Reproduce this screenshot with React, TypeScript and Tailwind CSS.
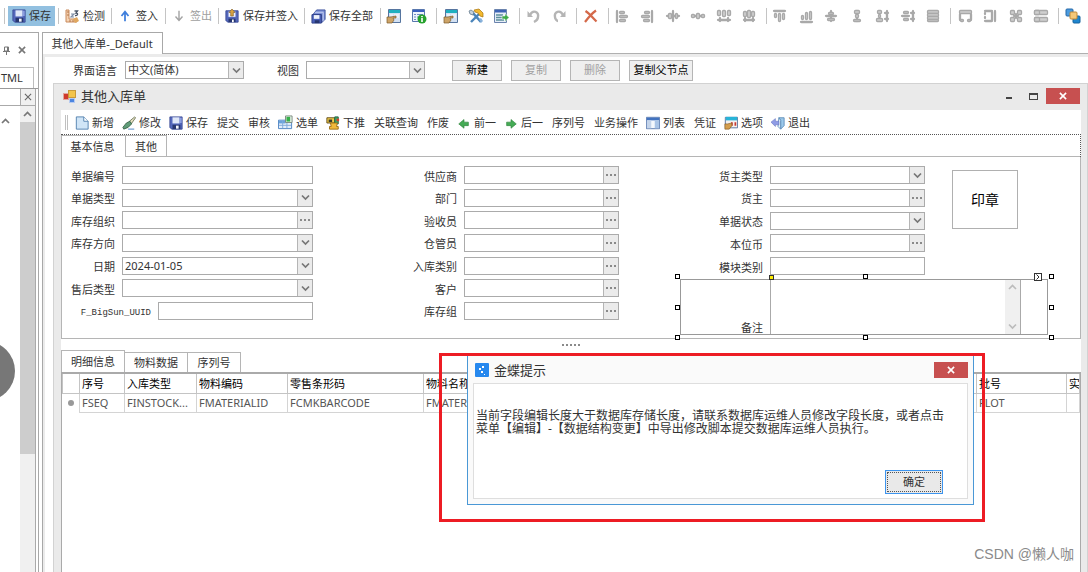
import type { ReactNode } from "react";
import clsx from "clsx";

type Rect = [number, number, number, number];

/* ---------- icons ---------- */

function Svg({ children, size = 16 }: { children: ReactNode; size?: number }) {
  return (
    <svg width={size} height={size} viewBox="0 0 16 16" className="shrink-0" aria-hidden="true">
      {children}
    </svg>
  );
}

function SaveIcon() {
  return (
    <Svg size={14}>
      <path d="M1 1h14v14H3l-2-2z" fill="#5468bd" stroke="#3a4a96" />
      <path d="M4 1.5h8v7H4z" fill="#dfe7f8" />
      <path d="M12.500 2h2v6h-2z" fill="#8d9fe0" />
      <path d="M4 10h9v5H4z" fill="#27366f" />
      <path d="M8 11h3v3.500H8z" fill="#f4f6fc" />
    </Svg>
  );
}

function SaveInIcon() {
  return (
    <Svg size={14}>
      <path d="M1 2h14v13H3l-2-2z" fill="#5468bd" stroke="#3a4a96" />
      <path d="M4 3h8v6H4z" fill="#eef2fb" />
      <path d="M8 0l3.500 4H9.500v4h-3V4h-2z" fill="#d9a441" stroke="#7c5a28" strokeWidth=".7" />
      <path d="M4 11h8v4H4z" fill="#27366f" />
      <path d="M8 12h2v3H8z" fill="#fff" />
    </Svg>
  );
}

function SaveAllIcon() {
  return (
    <Svg size={15}>
      <path d="M6 1h9v10l-4 4V6H2z" fill="#7d90d6" stroke="#3a4f9c" />
      <path d="M4 3.500h9v9" fill="none" stroke="#c4cff0" />
      <path d="M1 6h10v9H1z" fill="#4a60ba" stroke="#2f4088" />
      <path d="M3 6.500h6v4H3z" fill="#eef2fb" />
      <path d="M4 12h5v3H4z" fill="#27366f" />
    </Svg>
  );
}

function CheckIcon() {
  return (
    <Svg>
      <path d="M2 2h3v9h8v3H2z" fill="#f5d3b3" stroke="#c98a5c" />
      <path d="M3 4h2M3 7h2M6 12v2M9 12v2" stroke="#b27446" />
      <path d="M7 6h3l-3 3h3" fill="none" stroke="#7f8fa8" strokeWidth="1.200" />
      <path d="M10.500 3h3L12 5c2.500 0 2 3-1 2.500" fill="none" stroke="#4a5568" strokeWidth="1.300" />
      <path d="M9 11l4-2 2 4-4 2z" fill="#e0a860" />
    </Svg>
  );
}

function ArrowIcon({ up }: { up?: boolean }) {
  return (
    <Svg size={14}>
      {up ? (
        <path d="M8 14V4M4 8l4-5 4 5" fill="none" stroke="#3f7fdc" strokeWidth="2" />
      ) : (
        <path d="M8 2v10M4 8.500l4 4.500 4-4.500" fill="none" stroke="#a3a3a3" strokeWidth="1.600" />
      )}
    </Svg>
  );
}

function FormHandIcon() {
  return (
    <Svg>
      <path d="M2.500 1.500h12v13h-12z" fill="#d3e1f3" stroke="#56759f" />
      <path d="M3 2h11v3H3z" fill="#1fb0c0" />
      <path d="M4 7h3M8 7h5M8 9h5" stroke="#fff" />
      <path d="M1 9h4l5-1v2H7l1 2-2 3H1z" fill="#cda468" stroke="#7c5a28" strokeWidth=".7" />
    </Svg>
  );
}

function FormInfoIcon() {
  return (
    <Svg>
      <path d="M1.500 1.500h12v12h-12z" fill="#eef3fb" stroke="#5877ae" />
      <path d="M2 2h11v2H2z" fill="#3a5fc0" />
      <path d="M3 6.500h2M6 6.500h6M3 9h2M6 9h3M3 11.500h2" stroke="#6f8cc2" />
      <circle cx="11" cy="11" r="4.500" fill="#27a22e" />
      <path d="M11 10v4M11 8v1.200" stroke="#fff" strokeWidth="1.600" />
    </Svg>
  );
}

function ToolsIcon() {
  return (
    <Svg>
      <path d="M4 4l9 10" stroke="#4a84ba" strokeWidth="2.600" />
      <path d="M11 6L3 14" stroke="#4a84ba" strokeWidth="2.400" />
      <path d="M1 3l2-1 3 2-1 3-3-1z" fill="#c4d1dd" stroke="#5a7184" strokeWidth=".7" />
      <path d="M6 2l5-1 4 4 0 4-3-1-2-3-3-1z" fill="#f2b92f" stroke="#a8720c" strokeWidth=".7" />
      <path d="M11 11l2-1 2 3-2 2z" fill="#8ab3dc" />
    </Svg>
  );
}

function ExportIcon() {
  return (
    <Svg>
      <path d="M1.500 1.500h12v13h-12z" fill="#e6edf8" stroke="#6b83ad" />
      <path d="M2 2h11v2.500H2z" fill="#3c63b5" />
      <path d="M3 7h7M3 9.500h6M3 12h8" stroke="#5c8f9a" strokeWidth="1.500" />
      <path d="M9 8h3V5.500l4 4-4 4V11H9z" fill="#3dab48" stroke="#fff" strokeWidth=".5" />
    </Svg>
  );
}

function UndoIcon({ flip }: { flip?: boolean }) {
  return (
    <Svg>
      {flip ? (
        <>
          <path d="M12 7C9 1 3 4 4 9c0 2 2 4 3 4" fill="none" stroke="#b5b5b5" strokeWidth="2.400" />
          <path d="M14.500 3v6H9z" fill="#b5b5b5" />
        </>
      ) : (
        <>
          <path d="M4 7c3-6 9-3 8 2 0 2-2 4-4 5" fill="none" stroke="#b5b5b5" strokeWidth="2.400" />
          <path d="M1.500 3v6H7z" fill="#b5b5b5" />
        </>
      )}
    </Svg>
  );
}

function DeleteIcon() {
  return (
    <Svg>
      <path d="M2.500 3C7 6 10 10 13.500 13.500M13 2.500C8 6 5 10 2 14" stroke="#d4694a" strokeWidth="2.200" fill="none" />
    </Svg>
  );
}

function LayersIcon() {
  return (
    <Svg>
      <rect x="1" y="1" width="7" height="7" rx="1" fill="#4a9bdf" stroke="#2568a8" />
      <rect x="8" y="8" width="7" height="7" rx="1" fill="#1f86cf" stroke="#15629e" />
      <rect x="5" y="4" width="7" height="7" rx="1" fill="#f5c878" stroke="#c08a38" />
    </Svg>
  );
}

function BlockIcon({ rects }: { rects: Rect[] }) {
  return (
    <Svg>
      {rects.map(([x, y, w, h], i) => (
        <rect key={i} x={x + 0.5} y={y + 0.5} width={w - 1} height={h - 1} rx="1" fill="#cfcfcf" stroke="#a9a9a9" strokeWidth="1.300" />
      ))}
    </Svg>
  );
}

const HORIZONTAL: Rect[][] = [
  [[2, 2, 2, 13], [5, 3, 6, 3], [5, 7, 9, 3], [5, 11, 7, 3]],
  [[12, 2, 2, 13], [5, 3, 6, 3], [2, 7, 9, 3], [4, 11, 7, 3]],
  [[1, 7, 14, 2], [3, 5, 4, 6], [7, 2, 2, 12], [10, 5, 3, 6]],
  [[1, 7, 14, 2], [1, 6, 4, 4], [6, 5, 4, 6], [11, 6, 4, 4]],
  [[1, 2, 4, 6], [6, 2, 4, 7], [11, 2, 4, 6], [1, 11, 14, 2], [3, 9, 2, 5], [11, 9, 2, 5]],
  [[2, 3, 4, 6], [6, 2, 4, 8], [10, 3, 4, 6], [2, 11, 12, 2], [3, 9, 2, 5], [11, 9, 2, 5]],
];

const VERTICAL: Rect[][] = [
  [[1, 2, 13, 2], [2, 5, 3, 5], [6, 5, 3, 9], [10, 5, 3, 7]],
  [[2, 13, 13, 2], [3, 7, 3, 5], [7, 4, 3, 8], [11, 3, 3, 9]],
  [[7, 2, 2, 12], [5, 4, 6, 3], [2, 7, 12, 2], [4, 10, 8, 3]],
  [[7, 2, 2, 12], [5, 2, 6, 4], [6, 6, 4, 4], [4, 11, 8, 3]],
  [[3, 2, 5, 4], [4, 6, 3, 4], [2, 10, 7, 4], [12, 2, 2, 12], [10, 4, 5, 2], [10, 10, 5, 2]],
  [[3, 3, 6, 3], [1, 7, 9, 2], [3, 10, 6, 3], [12, 2, 2, 12], [10, 4, 5, 2], [10, 10, 5, 2]],
  [[2, 2, 12, 4], [2, 5, 12, 4], [2, 8, 12, 4], [2, 11, 12, 3]],
];

const SIZING: Rect[][] = [
  [[2, 2, 13, 4], [2, 5, 2, 8], [13, 5, 2, 8], [3, 11, 4, 3], [10, 11, 4, 3]],
  [[2, 2, 9, 2], [2, 4, 2, 3], [2, 8, 2, 3], [2, 12, 9, 2], [9, 3, 2, 10], [12, 2, 2, 12]],
  [[2, 2, 5, 5], [9, 2, 5, 5], [2, 9, 5, 5], [9, 9, 5, 5], [7, 5, 2, 6], [5, 7, 6, 2]],
  [[1, 2, 14, 5], [1, 9, 14, 5], [1, 2, 6, 5], [1, 9, 6, 5]],
];

function NewIcon() {
  return (
    <Svg size={14}>
      <path d="M1.500 1H10l5 5v9H1.500z" fill="#d0e5f7" stroke="#4a7cab" />
      <path d="M10 1v5h5" fill="#fff" stroke="#4a7cab" />
    </Svg>
  );
}

function BrushIcon() {
  return (
    <Svg size={14}>
      <path d="M14.500 1l-6 5 2 3 5-7z" fill="#e8e2c4" stroke="#6b7357" />
      <path d="M9 6l-4 2-4 5 1 2 5-2 4-4z" fill="#5f9c78" stroke="#3a6448" />
      <path d="M7 15h7" stroke="#7ba5d4" strokeWidth="1.500" />
    </Svg>
  );
}

function PickIcon() {
  return (
    <Svg size={15}>
      <path d="M.5 5.500h14v9H.5z" fill="#e3eefb" stroke="#4e83c2" />
      <path d="M1 6h7v3H1z" fill="#6aa3dc" />
      <path d="M5 6v8M9.500 8v6M1 11h13" stroke="#7fabdb" />
      <path d="M8 1h7v7H8z" fill="#eef6ef" stroke="#7a8a7e" />
      <path d="M9 2h4v5H9z" fill="#35b14a" />
    </Svg>
  );
}

function PushIcon() {
  return (
    <Svg size={14}>
      <path d="M1 2h9v6H1z" fill="#f3cf4a" stroke="#5b4410" />
      <path d="M3 4h4v3H3z" fill="#3a3a2a" />
      <path d="M10 1h4v8h-4z" fill="#3aa86c" stroke="#1f5f3c" />
      <path d="M12 3h3v3h-3z" fill="#d8402c" />
      <path d="M5 8h8l-1 4h2v3H4v-3h2z" fill="#f0b93a" stroke="#9a6c16" />
    </Svg>
  );
}

function GreenArrow({ left }: { left?: boolean }) {
  return (
    <Svg size={14}>
      <path
        d={left ? "M2 9l6-5v3h5v4H8v3z" : "M14 9L8 4v3H3v4h5v3z"}
        fill="#45ab55"
        stroke="#2a8038"
        strokeWidth=".7"
      />
    </Svg>
  );
}

function ListIcon() {
  return (
    <Svg size={14}>
      <path d="M.5 1.500h15v13H.5z" fill="#f4f8fd" stroke="#4b6ea8" />
      <path d="M1 2h14v3H1z" fill="#4273c0" />
      <path d="M1 5h5v9H1z" fill="#c4d4ea" />
      <path d="M10 5h5v9h-5z" fill="#a9c4e6" />
    </Svg>
  );
}

function OptionIcon() {
  return (
    <Svg size={14}>
      <path d="M1.500 1.500h14v12h-14z" fill="#f5f0ee" stroke="#4f6c9a" />
      <path d="M2 1h13v4H2z" fill="#28b4d8" />
      <path d="M8 7h2v4H8zM12 7h2v4h-2z" fill="#c83a34" />
      <path d="M1 9h3l5-1v3l-3 4H1z" fill="#d49e4e" stroke="#80561e" strokeWidth=".7" />
    </Svg>
  );
}

function ExitIcon() {
  return (
    <Svg size={14}>
      <path d="M9 2h6v9l-4 4V5z" fill="#9cc9ea" stroke="#5c8cb8" />
      <path d="M9 2l2 3v10l-3-3z" fill="#e5f1fa" stroke="#5c8cb8" />
      <path d="M0 7l5-4v3h4v4H5v2z" fill="#8f9ce6" stroke="#6b79c4" strokeWidth=".7" />
    </Svg>
  );
}

function Chevron({ up, light }: { up?: boolean; light?: boolean }) {
  return (
    <svg width="9" height="7" viewBox="0 0 9 7" aria-hidden="true">
      <path d={up ? "M1 5l3.500-3.500L8 5" : "M1 1.500L4.500 5 8 1.500"} fill="none" stroke={light ? "#bcbcbc" : "#777"} strokeWidth="1.700" />
    </svg>
  );
}

function Dots({ count = 3 }: { count?: number }) {
  return (
    <span className="flex gap-[2px]">
      {Array.from({ length: count }, (_, i) => (
        <span key={i} className="size-[2px] bg-[#8a8a8a]" />
      ))}
    </span>
  );
}

function Cross({ color, size = 9, thin }: { color: string; size?: number; thin?: boolean }) {
  return (
    <svg width={size} height={size} viewBox="0 0 9 9" aria-hidden="true">
      <path d="M1 1l7 7M8 1L1 8" stroke={color} strokeWidth={thin ? 1.2 : 1.8} />
    </svg>
  );
}

/* ---------- top toolbar ---------- */

function Group({ className, children }: { className: string; children: ReactNode }) {
  return <div className={clsx("flex h-4 shrink-0 items-center border-l border-[#c4c4c4]", className)}>{children}</div>;
}

function ToolButton({ icon, text, gap, muted }: { icon: ReactNode; text?: string; gap?: string; muted?: boolean }) {
  return (
    <button type="button" className={clsx("flex items-center whitespace-nowrap", gap ?? "gap-1", muted && "text-[#a0a0a0]")}>
      {icon}
      {text}
    </button>
  );
}

function TopToolbar() {
  return (
    <header className="flex h-8 shrink-0 items-center overflow-hidden pl-1">
      <Group className="w-[54px] pl-[3px]">
        <button type="button" className="flex h-5 w-[47px] items-center gap-[3px] bg-[#92c0e0] pl-1 whitespace-nowrap">
          <SaveIcon />
          保存
        </button>
      </Group>
      <Group className="w-[53px] pl-[5px]"><ToolButton icon={<CheckIcon />} text="检测" gap="gap-[3px]" /></Group>
      <Group className="w-[54px] pl-[6px]"><ToolButton icon={<ArrowIcon up />} text="签入" /></Group>
      <Group className="w-[53px] pl-[6px]"><ToolButton icon={<ArrowIcon />} text="签出" muted /></Group>
      <Group className="w-[86px] pl-[6px]"><ToolButton icon={<SaveInIcon />} text="保存并签入" /></Group>
      <Group className="w-[76px] pl-[6px]"><ToolButton icon={<SaveAllIcon />} text="保存全部" gap="gap-[3px]" /></Group>
      <Group className="w-14 gap-[9px] pl-[5px]">
        <ToolButton icon={<FormHandIcon />} />
        <ToolButton icon={<FormInfoIcon />} />
      </Group>
      <Group className="w-[83px] gap-[9px] pl-[6px]">
        <ToolButton icon={<FormHandIcon />} />
        <ToolButton icon={<ToolsIcon />} />
        <ToolButton icon={<ExportIcon />} />
      </Group>
      <Group className="w-[57px] gap-[9px] pl-[6px]">
        <ToolButton icon={<UndoIcon />} />
        <ToolButton icon={<UndoIcon flip />} />
      </Group>
      <Group className="w-8 pl-[6px]"><ToolButton icon={<DeleteIcon />} /></Group>
      <Group className="w-[158px] justify-between pr-[9px] pl-[5px]">
        {HORIZONTAL.map((rects, i) => <ToolButton key={i} icon={<BlockIcon rects={rects} />} />)}
      </Group>
      <Group className="w-[184px] justify-between pr-[9px] pl-[5px]">
        {VERTICAL.map((rects, i) => <ToolButton key={i} icon={<BlockIcon rects={rects} />} />)}
      </Group>
      <Group className="w-[108px] justify-between pr-[9px] pl-[6px]">
        {SIZING.map((rects, i) => <ToolButton key={i} icon={<BlockIcon rects={rects} />} />)}
      </Group>
      <Group className="w-[30px] pl-[6px]"><ToolButton icon={<LayersIcon />} /></Group>
    </header>
  );
}

/* ---------- left dock ---------- */

function LeftDock() {
  return (
    <aside className="relative flex w-[39px] shrink-0 flex-col overflow-hidden border-t border-r border-[#a8a8a8]">
      <div className="flex h-[34px] items-center gap-[7px] pl-[2px]">
        <button type="button" aria-label="固定">
          <svg width="9" height="9" viewBox="0 0 9 9">
            <path d="M2.500 1h4v4h-4zM1 5.500h7M4.500 6v3" fill="none" stroke="#777" />
            <path d="M5 1h2v4H5z" fill="#777" />
          </svg>
        </button>
        <button type="button" aria-label="关闭面板"><Cross color="#777" size={8} /></button>
      </div>
      <button type="button" className="h-[21px] w-[34px] border-t border-r border-[#bdbdbd] pl-px text-left">TML</button>
      <div className="flex min-h-0 flex-1 flex-col border-t border-[#999]">
        <div className="mr-[2px] flex h-[17px] border-r border-b border-[#aaa]">
          <input aria-label="搜索" className="min-w-0 flex-1 outline-none" />
          <button type="button" aria-label="清除" className="flex w-[15px] items-center justify-center border-l border-[#aaa] bg-[#f0f0f0]">
            <Cross color="#666" size={8} thin />
          </button>
        </div>
        <div className="mr-[2px] flex min-h-0 flex-1 border-r border-[#aaa]">
          <div className="flex-1 pt-3 pl-px"><Chevron up /></div>
          <div className="flex w-[15px] flex-col bg-[#f0f0f0]">
            <div className="flex h-4 items-center justify-center"><Chevron up /></div>
            <div className="h-[332px] bg-[#cdcdcd]" />
          </div>
        </div>
      </div>
      <div className="absolute top-[308px] left-[-45px] size-[60px] rounded-full bg-[#777]" />
    </aside>
  );
}

/* ---------- form ---------- */

type FieldKind = "text" | "select" | "lookup" | "date";
type FieldDef = { label: string; kind: FieldKind; value?: string };

const LEFT_FIELDS: FieldDef[] = [
  { label: "单据编号", kind: "text" },
  { label: "单据类型", kind: "select" },
  { label: "库存组织", kind: "lookup" },
  { label: "库存方向", kind: "select" },
  { label: "日期", kind: "date", value: "2024-01-05" },
  { label: "售后类型", kind: "select" },
];

const MIDDLE_FIELDS: FieldDef[] = ["供应商", "部门", "验收员", "仓管员", "入库类别", "客户", "库存组"].map((label) => ({
  label,
  kind: "lookup",
}));

const RIGHT_FIELDS: FieldDef[] = [
  { label: "货主类型", kind: "select" },
  { label: "货主", kind: "lookup" },
  { label: "单据状态", kind: "select" },
  { label: "本位币", kind: "lookup" },
  { label: "模块类别", kind: "text" },
];

const END_BOX = "flex w-[15px] shrink-0 items-center justify-center border-l border-[#b5b5b5] bg-[#ebebeb]";

function Control({ id, kind, value, width }: { id: string; kind: FieldKind; value?: string; width: string }) {
  return (
    <div className={clsx("flex h-[18px] shrink-0 border border-[#ababab] bg-white", width)}>
      {kind === "select" ? (
        <select id={id} className="min-w-0 flex-1 appearance-none pl-[2px] outline-none">
          <option>{value ?? ""}</option>
        </select>
      ) : (
        <input id={id} defaultValue={value} className="min-w-0 flex-1 pl-[2px] outline-none" />
      )}
      {kind === "select" && <span className={END_BOX}><Chevron /></span>}
      {kind === "date" && <button type="button" aria-label="选择日期" className={END_BOX}><Chevron /></button>}
      {kind === "lookup" && <button type="button" aria-label="查找" className={END_BOX}><Dots /></button>}
    </div>
  );
}

function Field({ field, width }: { field: FieldDef; width: string }) {
  return (
    <div className="flex h-[18px] items-center justify-end gap-[7px]">
      <label htmlFor={field.label} className="pt-[3px] whitespace-nowrap">{field.label}</label>
      <Control id={field.label} kind={field.kind} value={field.value} width={width} />
    </div>
  );
}

const HANDLE_SPOTS = [
  "left-[-6px] top-[-6px]",
  "left-[182px] top-[-6px]",
  "right-[-7px] top-[-6px]",
  "left-[-6px] top-[25px]",
  "right-[-7px] top-[25px]",
  "left-[-6px] bottom-[-6px]",
  "left-[182px] bottom-[-6px]",
  "right-[-7px] bottom-[-6px]",
];

function RemarkBox() {
  return (
    <div className="relative flex h-[56px] w-[368px] shrink-0 items-stretch border border-[#999] bg-white">
      <label htmlFor="remark" className="flex w-[89px] items-end justify-end pr-[7px]">
        <span className="h-[14px]">备注</span>
      </label>
      <div className="flex w-[251px] border-x border-[#aaa]">
        <textarea id="remark" className="min-w-0 flex-1 resize-none outline-none" />
        <div className="flex w-[15px] flex-col items-center justify-between bg-[#f0f0f0] py-1">
          <Chevron up light />
          <Chevron light />
        </div>
      </div>
      {HANDLE_SPOTS.map((spot) => (
        <span key={spot} className={clsx("absolute size-[5px] border border-black bg-white", spot)} />
      ))}
      <span className="absolute top-[-5px] left-[88px] size-[5px] border border-[#333] bg-[#ffee00]" />
      <span className="absolute top-[-7px] right-[5px] flex size-2 items-center justify-center border border-[#333] bg-white">
        <svg width="4" height="6" viewBox="0 0 4 6"><path d="M.5 .5L3 3 .5 5.500" fill="none" stroke="#333" /></svg>
      </span>
    </div>
  );
}

function FormPanel() {
  return (
    <div className="flex h-[182px] shrink-0 items-start border-x border-b border-[#b5b5b5] pt-[9px]">
      <div className="flex h-[154px] w-[251px] shrink-0 flex-col justify-between">
        {LEFT_FIELDS.map((f) => <Field key={f.label} field={f} width="w-[191px]" />)}
        <div className="flex h-[18px] items-center justify-end gap-[7px]">
          <label htmlFor="uuid" className="pt-1 font-['Liberation_Mono',monospace] text-[9px]">F_BigSun_UUID</label>
          <Control id="uuid" kind="text" width="w-[155px]" />
        </div>
      </div>
      <div className="flex h-[154px] w-[306px] shrink-0 flex-col justify-between">
        {MIDDLE_FIELDS.map((f) => <Field key={f.label} field={f} width="w-[155px]" />)}
      </div>
      <div className="w-[306px] shrink-0">
        <div className="flex h-[109px] flex-col justify-between">
          {RIGHT_FIELDS.map((f) => <Field key={f.label} field={f} width="w-[155px]" />)}
        </div>
        <div className="mt-1 flex pl-[61px]"><RemarkBox /></div>
      </div>
      <div className="mt-1 ml-[27px] flex h-[59px] w-[66px] shrink-0 items-center justify-center border border-[#b0b0b0] text-sm text-black">
        印章
      </div>
    </div>
  );
}

/* ---------- inner window ---------- */

const ACTIONS: { text: string; icon?: ReactNode }[] = [
  { text: "新增", icon: <NewIcon /> },
  { text: "修改", icon: <BrushIcon /> },
  { text: "保存", icon: <SaveIcon /> },
  { text: "提交" },
  { text: "审核" },
  { text: "选单", icon: <PickIcon /> },
  { text: "下推", icon: <PushIcon /> },
  { text: "关联查询" },
  { text: "作废" },
  { text: "前一", icon: <GreenArrow left /> },
  { text: "后一", icon: <GreenArrow /> },
  { text: "序列号" },
  { text: "业务操作" },
  { text: "列表", icon: <ListIcon /> },
  { text: "凭证" },
  { text: "选项", icon: <OptionIcon /> },
  { text: "退出", icon: <ExitIcon /> },
];

function ActionBar() {
  return (
    <div className="flex h-6 shrink-0 items-center gap-[7px] overflow-hidden pt-px pl-1">
      <div className="h-[15px] w-[3px] border-x border-[#c0c0c0]" />
      {ACTIONS.map(({ text, icon }) => (
        <button
          key={text}
          type="button"
          className={clsx("flex shrink-0 items-center whitespace-nowrap", icon ? "gap-[3px] pr-px" : "pl-px pr-px")}
        >
          {icon}
          {text}
        </button>
      ))}
    </div>
  );
}

const COLUMNS = [
  { title: "序号", code: "FSEQ", width: "w-[45px]" },
  { title: "入库类型", code: "FINSTOCK...", width: "w-[72px]" },
  { title: "物料编码", code: "FMATERIALID", width: "w-[91px]" },
  { title: "零售条形码", code: "FCMKBARCODE", width: "w-[136px]" },
  { title: "物料名称", code: "FMATERIALNAME", width: "w-[553px]" },
  { title: "批号", code: "FLOT", width: "w-[90px]" },
  { title: "实", code: "", width: "w-auto" },
];

function EntryTable() {
  return (
    <table className="w-full table-fixed border-collapse border-t-2 border-[#aaa] text-left">
      <thead>
        <tr className="h-5 text-black">
          <th className="w-[17px] border border-[#c4c4c4]" aria-label="行标" />
          {COLUMNS.map((c) => (
            <th key={c.title} className={clsx("overflow-hidden border border-[#c4c4c4] pl-[2px] leading-[15px] font-normal whitespace-nowrap", c.width)}>
              {c.title}
            </th>
          ))}
        </tr>
      </thead>
      <tbody>
        <tr className="h-[19px] text-[#555]">
          <td className="text-center"><span className="mx-auto block size-[6px] rounded-full bg-[#999]" /></td>
          {COLUMNS.map((c) => (
            <td key={c.title} className="overflow-hidden border border-[#d4d4d4] pl-[2px] leading-[15px] whitespace-nowrap">{c.code}</td>
          ))}
        </tr>
      </tbody>
    </table>
  );
}

function FormWindow() {
  return (
    <section className="ml-2 flex min-h-0 flex-1 flex-col border-x border-t border-[#d2d2d2] bg-[#eaeaea] pr-[6px] pl-[7px]">
      <div className="flex h-[26px] shrink-0 items-center pr-px pb-[2px] pl-[2px]">
        <svg width="13" height="13" viewBox="0 0 13 13" aria-hidden="true">
          <rect x=".5" y="3.500" width="5" height="6" fill="#cf3a2c" stroke="#e2a49c" />
          <rect x="5.500" y=".5" width="7" height="7" fill="#f3c44a" stroke="#c89a3a" />
          <rect x="6.500" y="8.500" width="5" height="4" fill="#4d86e0" stroke="#b7cbf0" />
        </svg>
        <h1 className="ml-[5px] flex-1 text-[13px]">其他入库单</h1>
        <button type="button" aria-label="最小化" className="flex h-4 w-6 items-center justify-center">
          <span className="mt-1 h-[2px] w-[6px] bg-[#444]" />
        </button>
        <button type="button" aria-label="最大化" className="flex h-4 w-6 items-center justify-center">
          <span className="h-[7px] w-[9px] border border-t-2 border-[#444]" />
        </button>
        <button type="button" aria-label="关闭" className="ml-px flex h-4 w-[34px] items-center justify-center bg-[#c75050]">
          <Cross color="#fff" size={8} />
        </button>
      </div>
      <div className="flex min-h-0 flex-1 flex-col bg-white">
        <ActionBar />
        <div className="flex h-[23px] shrink-0 items-stretch border-t border-r border-dotted border-[#555]">
          <button type="button" className="w-16 border-t border-l border-solid border-[#b5b5b5] pr-[2px]">基本信息</button>
          <button type="button" className="w-[42px] border border-solid border-[#b5b5b5] pt-px">其他</button>
          <div className="flex-1 border-b border-solid border-[#b5b5b5]" />
        </div>
        <FormPanel />
        <div className="flex h-[11px] shrink-0 items-center justify-center"><Dots count={5} /></div>
        <div className="flex h-[22px] shrink-0 items-end">
          <button type="button" className="h-[22px] w-16 border border-b-0 border-[#b5b5b5]">明细信息</button>
          <button type="button" className="h-5 w-[63px] border border-b-0 border-l-0 border-[#b5b5b5]">物料数据</button>
          <button type="button" className="h-5 w-[53px] border border-b-0 border-l-0 border-[#b5b5b5]">序列号</button>
        </div>
        <div className="min-h-0 flex-1 border-x border-[#aaa]"><EntryTable /></div>
      </div>
    </section>
  );
}

function HintDialog() {
  return (
    <div className="absolute top-[353px] left-[439px] w-[546px] border-[3px] border-[#ed1c24] pr-2 pb-[14px] pl-[25px]">
      <div role="dialog" aria-labelledby="hint-title" className="flex h-[149px] flex-col border border-t-0 border-[#4a98d6] bg-[#fafafa] px-[5px] pb-[5px]">
        <div className="flex h-[27px] shrink-0 items-center pl-[2px]">
          <svg width="14" height="14" viewBox="0 0 14 14" aria-hidden="true">
            <rect width="14" height="14" rx="1" fill="#2688ee" />
            <path d="M7 3h2v2H7zM4 5h2v2H4zM6 8h2v2H6zM9 11h1v1H9z" fill="#fff" />
          </svg>
          <h2 id="hint-title" className="ml-[5px] flex-1 text-[13px]">金蝶提示</h2>
          <button type="button" aria-label="关闭提示" className="flex h-4 w-[34px] items-center justify-center bg-[#c75050]">
            <Cross color="#fff" size={8} />
          </button>
        </div>
        <div className="flex flex-1 flex-col justify-between border border-[#dedede] bg-white pt-[25px]">
          <p className="pl-[2px] text-xs leading-[13px] whitespace-nowrap">
            当前字段编辑长度大于数据库存储长度，请联系数据库运维人员修改字段长度，或者点击
            <br />
            菜单【编辑】-【数据结构变更】中导出修改脚本提交数据库运维人员执行。
          </p>
          <button type="button" className="mr-6 mb-1 h-6 w-[58px] self-end border border-[#3c94ee] bg-[#e9e9e9] p-px">
            <span className="flex h-full items-center justify-center border border-dotted border-[#555]">确定</span>
          </button>
        </div>
      </div>
    </div>
  );
}

const VIEW_BUTTONS = [
  { text: "新建", width: "w-[50px]" },
  { text: "复制", width: "w-[50px]", disabled: true },
  { text: "删除", width: "w-[50px]", disabled: true },
  { text: "复制父节点", width: "w-16" },
];

export default function App() {
  return (
    <div className="relative flex h-screen w-full flex-col overflow-hidden bg-white font-['Noto_Sans','Noto_Sans_CJK_SC',sans-serif] text-[11px] leading-4 text-[#333]">
      <TopToolbar />
      <div className="flex min-h-0 flex-1">
        <LeftDock />
        <main className="ml-[3px] flex min-w-0 flex-1 flex-col">
          <div className="flex h-[22px] shrink-0">
            <button type="button" className="w-[121px] border-x border-t border-[#a8a8a8] pr-px whitespace-nowrap">其他入库单-_Default</button>
            <div className="flex-1 border-b border-[#b0b0b0]" />
          </div>
          <div className="flex min-h-0 flex-1 flex-col border-l border-[#a8a8a8]">
            <div className="flex min-h-0 flex-1 flex-col border-t-[3px] border-l-2 border-[#ebebeb]">
              <div className="flex h-[26px] shrink-0 items-center pl-7">
                <label htmlFor="lang" className="mr-2 w-[44px] pt-[2px]">界面语言</label>
                <Control id="lang" kind="select" value="中文(简体)" width="w-[119px]" />
                <label htmlFor="view" className="mr-[7px] ml-[33px] w-[22px] pt-[2px]">视图</label>
                <Control id="view" kind="select" width="w-[119px]" />
                <div className="ml-[27px] flex gap-[9px]">
                  {VIEW_BUTTONS.map((b) => (
                    <button
                      key={b.text}
                      type="button"
                      disabled={b.disabled}
                      className={clsx("h-[21px] border border-[#b5b5b5] bg-[#efefef] whitespace-nowrap", b.width, b.disabled ? "text-[#a0a0a0]" : "text-black")}
                    >
                      {b.text}
                    </button>
                  ))}
                </div>
              </div>
              <FormWindow />
            </div>
          </div>
        </main>
      </div>
      <HintDialog />
      <p className="absolute right-[14px] bottom-2 font-['Liberation_Sans','Noto_Sans_CJK_SC',sans-serif] text-sm text-[#8a8a8a]">CSDN @懒人咖</p>
    </div>
  );
}
